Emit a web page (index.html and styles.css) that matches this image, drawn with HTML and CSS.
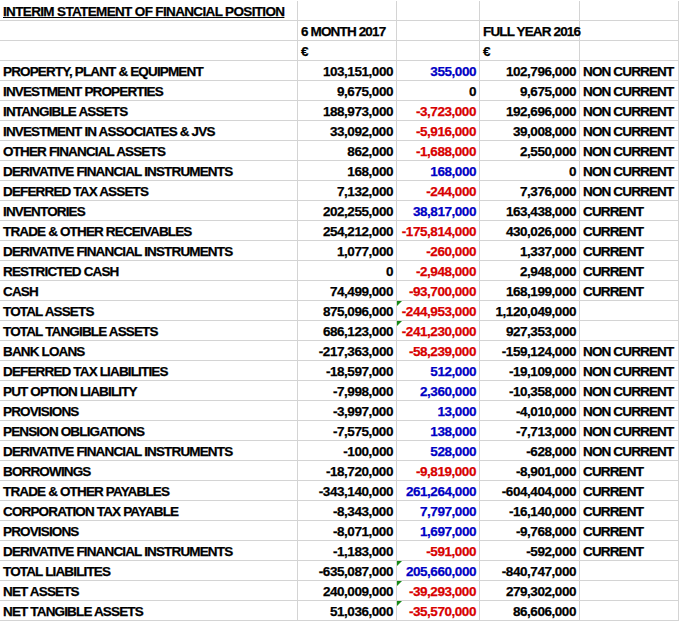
FILE: index.html
```html
<!DOCTYPE html>
<html lang="en">
<head>
<meta charset="utf-8">
<title>Interim Statement of Financial Position</title>
<link rel="stylesheet" href="styles.css">
</head>
<body>
<div class="sheet">
<table class="grid">
  <colgroup>
    <col class="c-label">
    <col class="c-h1">
    <col class="c-diff">
    <col class="c-fy">
    <col class="c-type">
  </colgroup>
  <tbody>
    <tr><td class="label title"><span class="u">INTERIM STATEMENT OF FINANCIAL POSITION</span></td><td></td><td></td><td></td><td></td></tr>
    <tr><td></td><td class="head">6 MONTH 2017</td><td></td><td class="head">FULL YEAR 2016</td><td></td></tr>
    <tr><td></td><td class="head">€</td><td></td><td class="head">€</td><td></td></tr>
    <tr><td class="label">PROPERTY, PLANT &amp; EQUIPMENT</td><td class="num">103,151,000</td><td class="num pos">355,000</td><td class="num">102,796,000</td><td class="label">NON CURRENT</td></tr>
    <tr><td class="label">INVESTMENT PROPERTIES</td><td class="num">9,675,000</td><td class="num">0</td><td class="num">9,675,000</td><td class="label">NON CURRENT</td></tr>
    <tr><td class="label">INTANGIBLE ASSETS</td><td class="num">188,973,000</td><td class="num neg">-3,723,000</td><td class="num">192,696,000</td><td class="label">NON CURRENT</td></tr>
    <tr><td class="label">INVESTMENT IN ASSOCIATES &amp; JVS</td><td class="num">33,092,000</td><td class="num neg">-5,916,000</td><td class="num">39,008,000</td><td class="label">NON CURRENT</td></tr>
    <tr><td class="label">OTHER FINANCIAL ASSETS</td><td class="num">862,000</td><td class="num neg">-1,688,000</td><td class="num">2,550,000</td><td class="label">NON CURRENT</td></tr>
    <tr><td class="label">DERIVATIVE FINANCIAL INSTRUMENTS</td><td class="num">168,000</td><td class="num pos">168,000</td><td class="num">0</td><td class="label">NON CURRENT</td></tr>
    <tr><td class="label">DEFERRED TAX ASSETS</td><td class="num">7,132,000</td><td class="num neg">-244,000</td><td class="num">7,376,000</td><td class="label">NON CURRENT</td></tr>
    <tr><td class="label">INVENTORIES</td><td class="num">202,255,000</td><td class="num pos">38,817,000</td><td class="num">163,438,000</td><td class="label">CURRENT</td></tr>
    <tr><td class="label">TRADE &amp; OTHER RECEIVABLES</td><td class="num">254,212,000</td><td class="num neg">-175,814,000</td><td class="num">430,026,000</td><td class="label">CURRENT</td></tr>
    <tr><td class="label">DERIVATIVE FINANCIAL INSTRUMENTS</td><td class="num">1,077,000</td><td class="num neg">-260,000</td><td class="num">1,337,000</td><td class="label">CURRENT</td></tr>
    <tr><td class="label">RESTRICTED CASH</td><td class="num">0</td><td class="num neg">-2,948,000</td><td class="num">2,948,000</td><td class="label">CURRENT</td></tr>
    <tr><td class="label">CASH</td><td class="num">74,499,000</td><td class="num neg">-93,700,000</td><td class="num">168,199,000</td><td class="label">CURRENT</td></tr>
    <tr><td class="label">TOTAL ASSETS</td><td class="num">875,096,000</td><td class="num neg flag">-244,953,000</td><td class="num">1,120,049,000</td><td></td></tr>
    <tr><td class="label">TOTAL TANGIBLE ASSETS</td><td class="num">686,123,000</td><td class="num neg flag">-241,230,000</td><td class="num">927,353,000</td><td></td></tr>
    <tr><td class="label">BANK LOANS</td><td class="num">-217,363,000</td><td class="num neg">-58,239,000</td><td class="num">-159,124,000</td><td class="label">NON CURRENT</td></tr>
    <tr><td class="label">DEFERRED TAX LIABILITIES</td><td class="num">-18,597,000</td><td class="num pos">512,000</td><td class="num">-19,109,000</td><td class="label">NON CURRENT</td></tr>
    <tr><td class="label">PUT OPTION LIABILITY</td><td class="num">-7,998,000</td><td class="num pos">2,360,000</td><td class="num">-10,358,000</td><td class="label">NON CURRENT</td></tr>
    <tr><td class="label">PROVISIONS</td><td class="num">-3,997,000</td><td class="num pos">13,000</td><td class="num">-4,010,000</td><td class="label">NON CURRENT</td></tr>
    <tr><td class="label">PENSION OBLIGATIONS</td><td class="num">-7,575,000</td><td class="num pos">138,000</td><td class="num">-7,713,000</td><td class="label">NON CURRENT</td></tr>
    <tr><td class="label">DERIVATIVE FINANCIAL INSTRUMENTS</td><td class="num">-100,000</td><td class="num pos">528,000</td><td class="num">-628,000</td><td class="label">NON CURRENT</td></tr>
    <tr><td class="label">BORROWINGS</td><td class="num">-18,720,000</td><td class="num neg">-9,819,000</td><td class="num">-8,901,000</td><td class="label">CURRENT</td></tr>
    <tr><td class="label">TRADE &amp; OTHER PAYABLES</td><td class="num">-343,140,000</td><td class="num pos">261,264,000</td><td class="num">-604,404,000</td><td class="label">CURRENT</td></tr>
    <tr><td class="label">CORPORATION TAX PAYABLE</td><td class="num">-8,343,000</td><td class="num pos">7,797,000</td><td class="num">-16,140,000</td><td class="label">CURRENT</td></tr>
    <tr><td class="label">PROVISIONS</td><td class="num">-8,071,000</td><td class="num pos">1,697,000</td><td class="num">-9,768,000</td><td class="label">CURRENT</td></tr>
    <tr><td class="label">DERIVATIVE FINANCIAL INSTRUMENTS</td><td class="num">-1,183,000</td><td class="num neg">-591,000</td><td class="num">-592,000</td><td class="label">CURRENT</td></tr>
    <tr><td class="label">TOTAL LIABILITES</td><td class="num">-635,087,000</td><td class="num pos flag">205,660,000</td><td class="num">-840,747,000</td><td></td></tr>
    <tr><td class="label">NET ASSETS</td><td class="num">240,009,000</td><td class="num neg flag">-39,293,000</td><td class="num">279,302,000</td><td></td></tr>
    <tr><td class="label">NET TANGIBLE ASSETS</td><td class="num">51,036,000</td><td class="num neg flag">-35,570,000</td><td class="num">86,606,000</td><td></td></tr>
  </tbody>
</table>
</div>
</body>
</html>
```

FILE: styles.css
```css
html, body {
  margin: 0;
  padding: 0;
  background: #ffffff;
}

.sheet {
  padding-top: 1px;
  width: 679px;
}

.grid {
  border-collapse: separate;
  border-spacing: 0;
  table-layout: fixed;
  width: 679px;
  font-family: "Liberation Sans", Arial, sans-serif;
  font-weight: bold;
  font-size: 13.5px;
  color: #000000;
  -webkit-text-stroke: 0.25px currentColor;
}

.c-label { width: 298px; }
.c-h1 { width: 99px; }
.c-diff { width: 83px; }
.c-fy { width: 100px; }
.c-type { width: 99px; }

.grid td {
  box-sizing: border-box;
  height: 20px;
  padding: 2px 3px 0 3px;
  line-height: 17px;
  border-right: 1px solid #d4d4d4;
  border-bottom: 1px solid #d4d4d4;
  white-space: nowrap;
  overflow: visible;
  vertical-align: top;
}

.label,
.head {
  text-align: left;
  letter-spacing: -0.85px;
}

.title .u {
  text-decoration: underline;
  text-decoration-thickness: 1px;
  text-underline-offset: 1px;
  letter-spacing: -0.65px;
}

.num {
  text-align: right;
  letter-spacing: -0.45px;
}

.neg { color: #d80000; }
.pos { color: #0000c4; }

.flag {
  position: relative;
}

.flag::before {
  content: "";
  position: absolute;
  top: 0;
  left: 0;
  width: 0;
  height: 0;
  border-top: 5px solid #178a17;
  border-right: 5px solid transparent;
}
```
